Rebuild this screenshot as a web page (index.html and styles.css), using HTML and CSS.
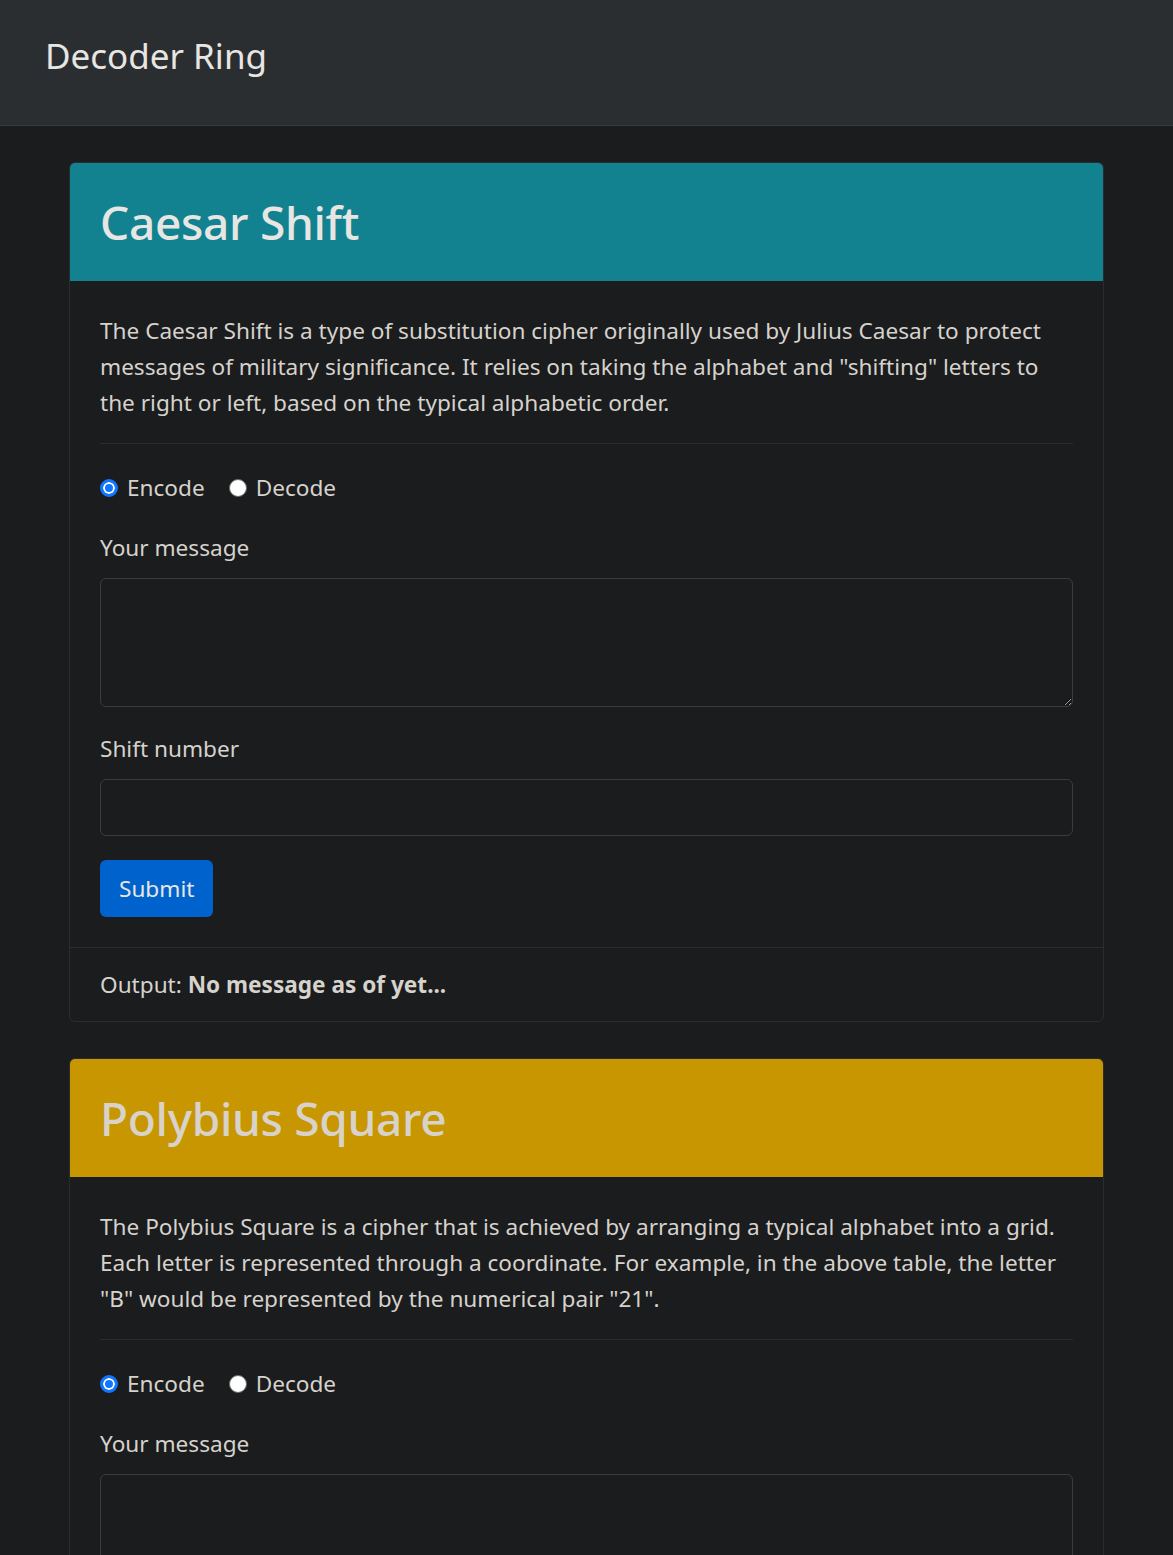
FILE: index.html
```html
<!DOCTYPE html>
<html lang="en">
<head>
<meta charset="utf-8">
<title>Decoder Ring</title>
<link rel="stylesheet" href="styles.css">
</head>
<body>
<nav class="navbar">
  <span class="brand">Decoder Ring</span>
</nav>
<main class="container">
  <section class="card">
    <div class="card-header teal"><h1 class="card-title">Caesar Shift</h1></div>
    <div class="card-body">
      <p class="intro">The Caesar Shift is a type of substitution cipher originally used by Julius Caesar to protect messages of military significance. It relies on taking the alphabet and "shifting" letters to the right or left, based on the typical alphabetic order.</p>
      <hr class="divider">
      <form class="cipher-form">
        <div class="radio-row">
          <label class="radio"><input type="radio" name="c-mode" checked><span>Encode</span></label>
          <label class="radio"><input type="radio" name="c-mode"><span>Decode</span></label>
        </div>
        <div class="form-group">
          <label class="field-label" for="c-msg">Your message</label>
          <textarea id="c-msg" class="field textarea"></textarea>
        </div>
        <div class="form-group">
          <label class="field-label" for="c-shift">Shift number</label>
          <input id="c-shift" type="number" class="field input">
        </div>
        <button type="button" class="btn">Submit</button>
      </form>
    </div>
    <div class="card-footer">Output: <strong>No message as of yet...</strong></div>
  </section>

  <section class="card">
    <div class="card-header gold"><h1 class="card-title dim">Polybius Square</h1></div>
    <div class="card-body">
      <p class="intro">The Polybius Square is a cipher that is achieved by arranging a typical alphabet into a grid. Each letter is represented through a coordinate. For example, in the above table, the letter "B" would be represented by the numerical pair "21".</p>
      <hr class="divider">
      <form class="cipher-form">
        <div class="radio-row">
          <label class="radio"><input type="radio" name="p-mode" checked><span>Encode</span></label>
          <label class="radio"><input type="radio" name="p-mode"><span>Decode</span></label>
        </div>
        <div class="form-group">
          <label class="field-label" for="p-msg">Your message</label>
          <textarea id="p-msg" class="field textarea"></textarea>
        </div>
      </form>
    </div>
  </section>
</main>
</body>
</html>
```
FILE: styles.css
```css
* { box-sizing: border-box; }
html, body { margin: 0; padding: 0; }
body {
  background: #1b1c1e;
  color: #d6d2cc;
  font-family: "Noto Sans", "Open Sans", sans-serif;
  font-size: 22.6px;
  line-height: 36px;
}
.navbar {
  background: #2b2e31;
  height: 126px;
  border-bottom: 1px solid #383b3e;
  display: flex;
  align-items: center;
  padding: 0 45px;
}
.brand {
  font-size: 35px;
  color: #e8e6e3;
  line-height: 40px;
  margin-top: -14px;
}
.container {
  width: 1035px;
  margin: 36px 0 0 69px;
}
.card {
  border: 1px solid #2a2d30;
  border-radius: 6px;
  margin-bottom: 36px;
  overflow: hidden;
}
.card-header {
  height: 118px;
  padding: 0 30px;
  display: flex;
  align-items: center;
}
.teal { background: #138290; }
.gold { background: #c89600; }
.card-title {
  margin: 0;
  font-weight: 500;
  font-size: 46px;
  line-height: 56px;
  color: #e8e6e3;
  letter-spacing: -0.3px;
}
.card-title.dim { color: #d7d2ca; }
.card-body { padding: 32px 30px 30px; }
.intro { margin: 0 0 22px; }
.divider {
  border: 0;
  border-top: 1px solid #2a2d30;
  margin: 0 0 26px;
}
.radio-row {
  display: flex;
  gap: 24px;
  margin-bottom: 24px;
}
.radio {
  display: flex;
  align-items: center;
  gap: 9px;
}
.radio input {
  appearance: none;
  margin: 0;
  width: 18px;
  height: 18px;
  border-radius: 50%;
  background: #ffffff;
  border: 1px solid #6b6b6b;
}
.radio input:checked {
  border: 3px solid #1275ff;
  background: #1275ff;
  box-shadow: inset 0 0 0 2px #ffffff;
}
.form-group { margin-bottom: 24px; }
.field-label {
  display: block;
  margin-bottom: 12px;
}
.field {
  display: block;
  width: 100%;
  background: #1b1c1e;
  border: 1px solid #3a3d40;
  border-radius: 6px;
  color: #d6d2cc;
  font: inherit;
}
.textarea { height: 129px; resize: vertical; }
.input { height: 57px; }
.btn {
  background: #0062cc;
  color: #e8e6e3;
  border: 0;
  border-radius: 6px;
  height: 57px;
  padding: 0 19px;
  font: inherit;
}
.card-footer {
  border-top: 1px solid #2a2d30;
  padding: 19px 30px 18px;
}
.card-footer strong { font-weight: 700; color: #d6d2cc; }
```
